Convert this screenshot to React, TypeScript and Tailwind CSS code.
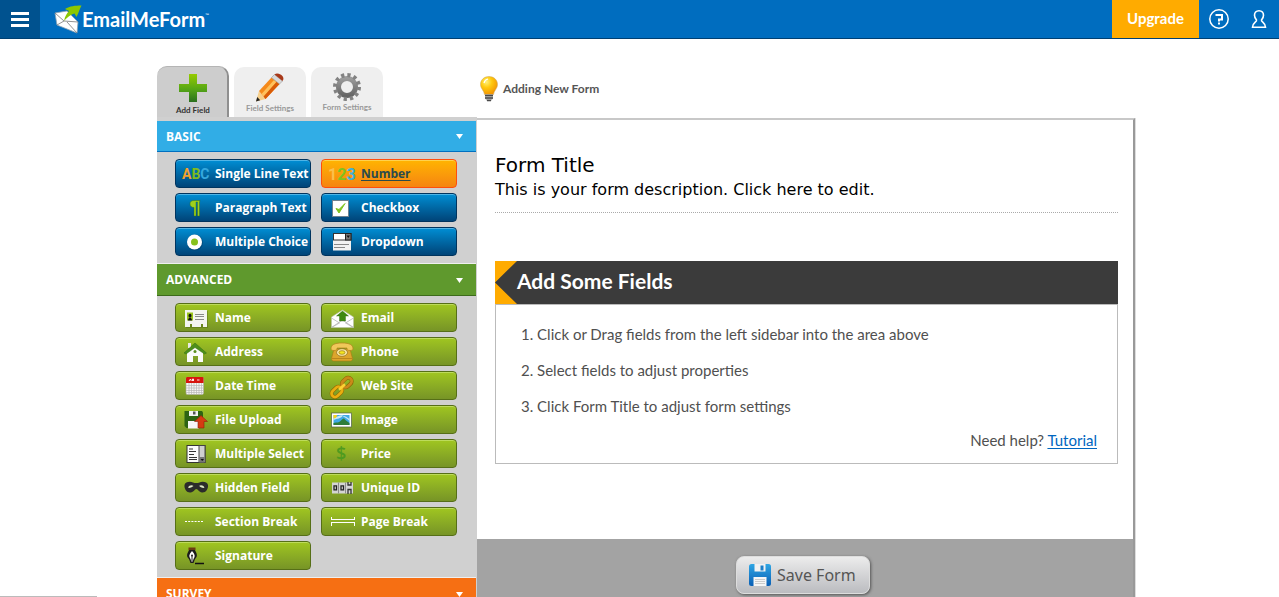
import type { ReactNode } from "react";
import clsx from "clsx";

interface FieldItem {
  label: string;
  icon: ReactNode;
  active?: boolean;
}

interface FieldSectionProps {
  title: string;
  headerClass: string;
  buttonClass: string;
  items: FieldItem[];
}

const Icon = ({ children }: { children: ReactNode }) => (
  <svg
    viewBox="0 0 24 23"
    className="h-[23px] w-6 shrink-0 overflow-visible"
    aria-hidden="true"
  >
    {children}
  </svg>
);

const basicFields: FieldItem[] = [
  {
    label: "Single Line Text",
    icon: (
      <Icon>
        <text x="-1" y="17" className="font-[Roboto,sans-serif] text-[14px] font-bold">
          <tspan fill="#f2a12b">A</tspan>
          <tspan fill="#7fba1e">B</tspan>
          <tspan fill="#35a8df">C</tspan>
        </text>
      </Icon>
    ),
  },
  {
    label: "Number",
    active: true,
    icon: (
      <Icon>
        <text x="-1" y="18" className="font-[Roboto,sans-serif] text-[16px] font-bold">
          <tspan fill="#fbc04b">1</tspan>
          <tspan fill="#7fc31e">2</tspan>
          <tspan fill="#3fb0d8">3</tspan>
        </text>
      </Icon>
    ),
  },
  {
    label: "Paragraph Text",
    icon: (
      <Icon>
        <path
          d="M17 4.500H11C8 4.500 7 6 7 8c0 2.200 1.500 3.500 4 3.500V20h2V6h1.500v14h2V6z"
          fill="#9fd01c"
          stroke="#2f6b10"
          strokeWidth=".4"
        />
      </Icon>
    ),
  },
  {
    label: "Checkbox",
    icon: (
      <Icon>
        <rect x="3.500" y="4.500" width="16" height="16" fill="#fff" stroke="#6f8190" />
        <path d="M7 12.500l3 4.500 6-9.500-6 6z" fill="#7fc31e" stroke="#7fc31e" />
      </Icon>
    ),
  },
  {
    label: "Multiple Choice",
    icon: (
      <Icon>
        <circle cx="12" cy="12.500" r="8" fill="#003a66" opacity=".5" />
        <circle cx="11.500" cy="12" r="7.500" fill="#fff" />
        <circle cx="11.500" cy="12" r="3.500" fill="#86c11c" />
      </Icon>
    ),
  },
  {
    label: "Dropdown",
    icon: (
      <Icon>
        <rect x="4" y="10" width="18" height="10.500" fill="#f1f1f1" />
        <path d="M5 14.500h15M5 17.500h11" stroke="#888" />
        <rect x="4.500" y="3.500" width="17.500" height="6.500" fill="#fff" stroke="#333" />
        <rect x="16.500" y="3.500" width="5.500" height="6.500" fill="#777" stroke="#222" />
        <path d="M17.500 5.500h3.500l-1.750 2.500z" fill="#111" />
      </Icon>
    ),
  },
];

const advancedFields: FieldItem[] = [
  {
    label: "Name",
    icon: (
      <Icon>
        <path d="M3 5h22v17H3z" fill="#4a6312" opacity=".4" />
        <path d="M2 4h22v17h-4v-3h-2v3H9v-3H7v3H2z" fill="#f4f5f1" />
        <rect x="4" y="6.500" width="6" height="8" fill="#9ac31c" />
        <path d="M5 14.500c0-2 1-2.500 2-2.500s2 .5 2 2.500z" fill="#111" />
        <ellipse cx="7" cy="9.800" rx="1.500" ry="2" fill="#111" />
        <path d="M12 8.500h9M12 10.500h9M12 13.500h9" stroke="#8a8a8a" />
      </Icon>
    ),
  },
  {
    label: "Email",
    icon: (
      <Icon>
        <path d="M2.500 11L13.500 4 24.500 11v10.500h-22z" fill="#fff" stroke="#b9c2a6" strokeWidth=".6" />
        <path d="M2.500 12l8 5-8 4.500M24.500 12l-8 5 8 4.500M2.500 21.500L13.500 14l11 7.500" fill="none" stroke="#b5b5b5" strokeWidth=".8" />
        <path d="M13.500 5l6 5h-3v5h-6v-5h-3z" fill="#3f8a12" stroke="#2d6b0c" strokeWidth=".4" />
      </Icon>
    ),
  },
  {
    label: "Address",
    icon: (
      <Icon>
        <path d="M4 12l8-7 8 7v10h-5v-6H10v6H4z" fill="#fbfbf9" />
        <path d="M5 3h3v5H5z" fill="#e9e9e6" />
        <path d="M1 13L12 3l11.500 10-2 1L12 7.500 3 14z" fill="#4d8f1b" stroke="#35700f" strokeWidth=".5" />
        <circle cx="12" cy="11.500" r="1.500" fill="#5b8f1e" />
      </Icon>
    ),
  },
  {
    label: "Phone",
    icon: (
      <Icon>
        <path d="M5 9h16l2.500 9.500c0 2-1 2.500-2.500 2.500H5c-1.500 0-2.500-.5-2.500-2.500z" fill="#dda52c" stroke="#a97913" strokeWidth=".6" />
        <path d="M2 9c0-4 3-6 11-6s11 2 11 6c0 2-6 2-6 0V8H8v1c0 2-6 2-6 0z" fill="#f0c85a" stroke="#b1811a" strokeWidth=".7" />
        <ellipse cx="13" cy="12.500" rx="5.500" ry="3.800" fill="#fae79d" stroke="#7d5c14" strokeWidth=".6" />
        <ellipse cx="13" cy="12.500" rx="3" ry="1.800" fill="#f5e61e" stroke="#8a6a1b" strokeWidth=".6" />
        <path d="M3 18.500h20" stroke="#b27d15" strokeWidth=".8" />
      </Icon>
    ),
  },
  {
    label: "Date Time",
    icon: (
      <Icon>
        <rect x="3" y="3.500" width="17.500" height="17" rx="1.500" fill="#f5f5f3" stroke="#a9a9a0" strokeWidth=".6" />
        <path d="M3 9V4.500C3 3.500 3.500 3 4.500 3H19c1 0 1.500.5 1.500 1.500V9z" fill="#d7150f" />
        <path d="M6 7l1.500-2 .8 2M9.500 7V5h1v2M14 6h2.500" stroke="#fff" fill="none" strokeWidth=".9" />
        <path
          d="M3 11.500h17.500M3 14h17.500M3 16.500h17.500M3 18.500h17.500M6 9v11M8.500 9v11M11 9v11M13.500 9v11M16 9v11M18.500 9v11"
          stroke="#b8b8b8"
          strokeWidth=".7"
        />
      </Icon>
    ),
  },
  {
    label: "Web Site",
    icon: (
      <Icon>
        <g fill="none" transform="rotate(-43 13 13)">
          <rect x="0" y="9.500" width="12" height="7" rx="3.500" stroke="#8a6200" strokeWidth="3.800" />
          <rect x="14" y="9.500" width="11" height="7" rx="3.500" stroke="#8a6200" strokeWidth="3.800" />
          <rect x="0" y="9.500" width="12" height="7" rx="3.500" stroke="#e9ae10" strokeWidth="2.800" />
          <rect x="14" y="9.500" width="11" height="7" rx="3.500" stroke="#c98a1a" strokeWidth="2.800" />
          <path d="M9 13h8" stroke="#fbd235" strokeWidth="2.500" />
        </g>
      </Icon>
    ),
  },
  {
    label: "File Upload",
    icon: (
      <Icon>
        <path d="M1.500 3h17.500l1 1.500v15.500H3.500L1.500 18z" fill="#2d6412" />
        <path d="M6 3h9v5H6z" fill="#f2f2f2" />
        <path d="M10 3.500h2.500v3H10z" fill="#555" />
        <path d="M5 13h11v7.500H5z" fill="#f7f7f7" />
        <path d="M18 7.500l6.500 6h-3.500v6.500h-6v-6.500h-3.500z" fill="#d63c12" stroke="#8e2408" strokeWidth=".6" />
      </Icon>
    ),
  },
  {
    label: "Image",
    icon: (
      <Icon>
        <rect x="2.500" y="5" width="20" height="14" fill="#fff" stroke="#4d5f48" strokeWidth=".7" />
        <rect x="4.500" y="7" width="16" height="10" fill="#3fa9e6" />
        <path d="M4.500 12c4-2 7-1 9-4 1.500 1 4 2 7 5V11c-3-2-4-3-6-3-2-2-6 1-10 2z" fill="#c8e8f5" />
        <path d="M4.500 17v-2c4-1 5 0 7-2s3-3 4-2 3 3 5 4v2z" fill="#2f7d3a" />
        <path d="M4.500 7h3.500c0 2-1.500 3.500-3.500 3.500z" fill="#f7d21d" />
      </Icon>
    ),
  },
  {
    label: "Multiple Select",
    icon: (
      <Icon>
        <rect x="4" y="3.500" width="18" height="17" fill="#fbfbfb" stroke="#333" />
        <rect x="16" y="3.500" width="6" height="17" fill="#cfcfcf" stroke="#444" />
        <rect x="16.500" y="15" width="5" height="5.500" fill="#777" />
        <path d="M17.500 17h3.500l-1.750 2z" fill="#111" />
        <path d="M6 7h4M6 9.500h7M6 12.500h5M6 15.500h8M6 17.500h8" stroke="#333" />
      </Icon>
    ),
  },
  {
    label: "Price",
    icon: (
      <Icon>
        <text x="7" y="18" fill="#4f9a1f" className="font-['Open_Sans',sans-serif] text-[18px] font-semibold">
          $
        </text>
      </Icon>
    ),
  },
  {
    label: "Hidden Field",
    icon: (
      <Icon>
        <path
          d="M1.500 9C2 6 7 5 10 6.500c2 .8 4.500.8 6.500 0C19.500 5 24.500 6 25 9c.5 4-2.500 8-6 7.500-3-.3-4-3.500-5.700-3.500S11 16.300 7.500 16.500C4 17 1 13 1.500 9z"
          fill="#2b2b2b"
        />
        <path d="M5 11.800c1.200-2.800 4-3 5.500-1.800-1 .2-1.500 2.300-5.500 1.800zM21.500 11.800c-1.200-2.800-4-3-5.500-1.800 1 .2 1.500 2.300 5.500 1.800z" fill="#dfe8c8" />
      </Icon>
    ),
  },
  {
    label: "Unique ID",
    icon: (
      <Icon>
        <rect x="3" y="6.500" width="21" height="11" fill="#d4d4d4" />
        <path d="M9.500 6.500v11M16.500 6.500v11" stroke="#8a8a8a" />
        <path d="M5 9.800h2.500v4H5zM12 9.800h2.500v4H12z" fill="none" stroke="#222" strokeWidth="1.300" />
        <path d="M19 6v3h3V6M19 18v-4.500h3V18" fill="none" stroke="#333" strokeWidth="1.300" />
      </Icon>
    ),
  },
  {
    label: "Section Break",
    icon: (
      <Icon>
        <path d="M2 11.500h18" stroke="#fff" strokeDasharray="2 1.200" />
      </Icon>
    ),
  },
  {
    label: "Page Break",
    icon: (
      <Icon>
        <path d="M2.500 7v3M2.500 12v4M25.500 7v3M25.500 12v4M2 9.500h24M2 12.500h24" stroke="#fff" fill="none" />
      </Icon>
    ),
  },
  {
    label: "Signature",
    icon: (
      <Icon>
        <path d="M5.500 3.500h7v2.500h-7z" fill="#6b3d12" />
        <path d="M6 6h6c2 4 3 6 0 9l-1.500 4h-3L6 15c-3-3-2-5 0-9z" fill="#1c1c1c" />
        <path d="M9 7c3 3 3.500 5.500 1.500 8L9.500 18h-1l-1-3C5.500 12.500 6 10 9 7z" fill="#fff" />
        <path d="M9 12v6" stroke="#222" />
        <circle cx="9" cy="11.500" r="1" fill="#222" />
        <path d="M12 19.500h9" stroke="#111" strokeWidth="1.500" />
      </Icon>
    ),
  },
];

const FieldButton = ({ item, className }: { item: FieldItem; className: string }) => (
  <button
    type="button"
    className={clsx(
      "flex h-[29px] items-center gap-2 rounded border pl-[7px] text-left font-['Open_Sans',sans-serif] text-[12px] leading-4 font-bold whitespace-nowrap",
      item.active
        ? "border-[#ff4e0d] bg-linear-to-b from-[#ffb400] to-[#f58410] text-[#2b4a4d] underline underline-offset-2 shadow-[inset_0_1px_0_#ffd24d]"
        : className
    )}
  >
    {item.icon}
    {item.label}
  </button>
);

const SectionHeader = ({ title, className }: { title: string; className: string }) => (
  <button
    type="button"
    className={clsx(
      "flex w-full items-center justify-between border-b pt-px pr-[13px] pl-[9px] text-left font-['Open_Sans',sans-serif] text-[12px] leading-4 font-bold text-white",
      className
    )}
  >
    {title}
    <svg viewBox="0 0 7 5" className="h-[5px] w-[7px]" aria-hidden="true">
      <path d="M0 0h7L3.500 5z" fill="#fff" />
    </svg>
  </button>
);

const FieldSection = ({ title, headerClass, buttonClass, items }: FieldSectionProps) => (
  <section>
    <SectionHeader title={title} className={headerClass} />
    <div className="grid grid-cols-2 gap-x-2.5 gap-y-[5px] border-b border-[#efefef] py-[7px] pr-[19px] pl-[18px]">
      {items.map((item) => (
        <FieldButton key={item.label} item={item} className={buttonClass} />
      ))}
    </div>
  </section>
);

const Logo = () => (
  <a href="#" className="ml-[14px] flex items-center text-white">
    <svg viewBox="0 0 28 30" className="h-[30px] w-7" aria-hidden="true">
      <path d="M1 9l12-2 11 11-1 11L3 21z" fill="#fff" stroke="#8fa3b3" strokeWidth=".8" />
      <path d="M1 9l9 8 14 1M10 17l-7 4M13 18l10 11" fill="none" stroke="#777" strokeWidth=".8" />
      <path d="M10 17c1-5 3-8 5-10l-4-2c5-3 10-3.500 16.500-3.500C26 4 25 8 22.500 13l-2-3.500C16 11 14 13 10 17z" fill="#8cc800" />
    </svg>
    <span className="text-[20px] leading-6 font-bold">EmailMeForm</span>
    <span className="mb-2 text-[5px] leading-none">™</span>
  </a>
);

const Header = () => (
  <header className="flex h-[39px] items-stretch border-b border-[#004072] bg-[#006dbf]">
    <button
      type="button"
      aria-label="Menu"
      className="flex w-10 flex-col items-center justify-center gap-[3px] bg-[#00528f]"
    >
      <span className="h-[3px] w-[18px] bg-white" />
      <span className="h-[3px] w-[18px] bg-white" />
      <span className="h-[3px] w-[18px] bg-white" />
    </button>
    <Logo />
    <a
      href="#"
      className="ml-auto flex w-[87px] items-center justify-center bg-[#ffab00] pb-0.5 text-[15px] font-bold text-white"
    >
      Upgrade
    </a>
    <button type="button" aria-label="Help" className="flex w-10 items-center justify-center pb-px">
      <svg viewBox="0 0 20 20" className="size-5" fill="none" stroke="#fff" aria-hidden="true">
        <circle cx="10" cy="10" r="9.200" strokeWidth="1.500" />
        <path d="M6.500 6h6.500v4.500H10v2" strokeWidth="2" />
        <path d="M9 14.500h2" strokeWidth="2" />
      </svg>
    </button>
    <button type="button" aria-label="Account" className="flex w-10 items-center justify-center">
      <svg viewBox="0 0 16 20" className="h-5 w-4" fill="none" stroke="#fff" strokeWidth="1.600" aria-hidden="true">
        <path d="M8 1.800c-3 0-4.500 2-4.500 4.500 0 2.300 1 3.300 2 4.600C6.200 13 1.500 13.500 1.500 18.300h13c0-4.800-4.700-5.300-4-7.400 1-1.300 2-2.300 2-4.600 0-2.500-1.500-4.500-4.500-4.500z" />
      </svg>
    </button>
  </header>
);

const tabBase =
  "flex w-[72px] flex-col items-center rounded-t-[10px] text-[8px] leading-[10px] font-bold";

const Tabs = () => (
  <nav className="flex w-80 items-end gap-[5px]">
    <button
      type="button"
      className={clsx(
        tabBase,
        "h-[51px] border-t border-r-2 border-t-[#b5b5b5] border-r-[#8f8f8f] bg-[#cdcdcd] pt-[7px] pl-0.5 text-[#333]"
      )}
    >
      <svg viewBox="0 0 28 28" className="h-7 w-7" aria-hidden="true">
        <defs>
          <linearGradient id="plus" x1="0" y1="0" x2="0" y2="1">
            <stop offset="0" stopColor="#96cb00" />
            <stop offset=".55" stopColor="#55a516" />
            <stop offset="1" stopColor="#2a7020" />
          </linearGradient>
        </defs>
        <path d="M10 0h8v10h10v8H18v10h-8V18H0v-8h10z" fill="url(#plus)" />
      </svg>
      <span className="pt-[3px]">Add Field</span>
    </button>
    <button type="button" className={clsx(tabBase, "h-[50px] bg-[#efefef] pt-[6px] text-[#999]")}>
      <svg viewBox="0 0 30 30" className="h-[30px] w-[30px]" aria-hidden="true">
        <path d="M1 28.500L4 18l6.500 8z" fill="#f6cf8b" />
        <path d="M1 28.500l1.200-4.500 3 3.200z" fill="#222" />
        <path d="M4 18L16.500 4.500l8 6.500-14 15z" fill="#f58a1b" />
        <path d="M6.500 21L19 7l2.500 2L8.700 23.500z" fill="#ffc15c" />
        <path d="M8.700 23.500L21.500 9l3 2-14 15z" fill="#d95c08" />
        <path d="M16.500 4.500l3-3 8 6.500-3 3z" fill="#d9d9d9" stroke="#888" strokeWidth=".5" />
        <path d="M19.500 1.500C21 0 23 0 25.500 1.500s4 4 2 6.500z" fill="#a8391a" />
      </svg>
      <span>Field Settings</span>
    </button>
    <button type="button" className={clsx(tabBase, "h-[50px] bg-[#efefef] pt-[5px] text-[#999]")}>
      <svg viewBox="0 0 30 30" className="h-[30px] w-[30px]" aria-hidden="true">
        <defs>
          <linearGradient id="gear" x1="0" y1="0" x2="0" y2="1">
            <stop offset="0" stopColor="#9b9b9b" />
            <stop offset="1" stopColor="#666" />
          </linearGradient>
        </defs>
        <circle cx="15" cy="15" r="8.500" fill="none" stroke="url(#gear)" strokeWidth="5" />
        <circle cx="15" cy="15" r="12" fill="none" stroke="#828282" strokeWidth="4" strokeDasharray="3.200 3.083" />
      </svg>
      <span>Form Settings</span>
    </button>
  </nav>
);

const LightBulb = () => (
  <svg viewBox="0 0 20 28" className="h-7 w-5" aria-hidden="true">
    <defs>
      <radialGradient id="bulb" cx=".35" cy=".3" r=".8">
        <stop offset="0" stopColor="#fff27a" />
        <stop offset=".4" stopColor="#ffc90e" />
        <stop offset="1" stopColor="#f08a00" />
      </radialGradient>
    </defs>
    <path d="M10 1.500c-5 0-8.500 3.500-8.500 8 0 4 3.500 6 4 10h9c.5-4 4-6 4-10 0-4.500-3.500-8-8.500-8z" fill="url(#bulb)" stroke="#c9a45a" strokeWidth=".5" />
    <path d="M6 19.500h8v4l-2 2.500H8l-2-2.500z" fill="#b8b8b8" />
    <path d="M6 20.500h8M6 23h8M8 25.500h4" stroke="#4a4a4a" strokeWidth="1.300" />
    <path d="M5 8c.5-2 2-3.500 4-4" stroke="#fff" strokeWidth="1.200" fill="none" />
  </svg>
);

const SaveIcon = () => (
  <svg viewBox="0 0 24 24" className="size-6" aria-hidden="true">
    <defs>
      <linearGradient id="disk" x1="0" y1="0" x2="0" y2="1">
        <stop offset="0" stopColor="#2fa6e4" />
        <stop offset="1" stopColor="#0a5fb5" />
      </linearGradient>
    </defs>
    <rect x="1" y="1" width="22" height="22" rx="2.500" fill="url(#disk)" />
    <path d="M6.500 1h11v7.500h-11z" fill="#f2f2f2" />
    <path d="M12.500 2.500h3v5h-3z" fill="#1c7fc9" />
    <path d="M5.500 14h13v9h-13z" fill="#f6f6f6" />
    <path d="M7 16.500h10M7 18.500h10M7 20.500h10" stroke="#ccc" />
  </svg>
);

const FormPreview = () => (
  <main className="mt-px mr-px flex-1 border-t-2 border-r-2 border-t-[#c8c8c8] border-r-[#999] bg-white shadow-[1px_0_0_#ddd]">
    <div className="h-[419px] pt-[33px] pr-[15px] pl-[18px]">
      <div className="border-b border-dotted border-[#aaa] pb-[10px] font-['DejaVu_Sans',sans-serif] text-black">
        <h1 className="text-[20px] leading-[25px]">Form Title</h1>
        <p className="text-[16px] leading-6">
          This is your form description. Click here to edit.
        </p>
      </div>

      <section className="mt-12 text-[15px] text-[#505050]">
        <div className="flex h-[43px] items-center bg-[#3b3b3b]">
          <svg viewBox="0 0 22 43" className="h-[43px] w-[22px]" aria-hidden="true">
            <path d="M0 0h22L0 21.500 22 43H0z" fill="#ffab00" />
          </svg>
          <h2 className="pb-1 text-[21px] leading-6 font-bold text-white">Add Some Fields</h2>
        </div>
        <div className="border border-[#bbb] px-5 pt-[17px] pb-[11px]">
          <ol className="list-inside list-decimal space-y-3 pl-[5px] leading-6">
            <li>Click or Drag fields from the left sidebar into the area above</li>
            <li>Select fields to adjust properties</li>
            <li>Click Form Title to adjust form settings</li>
          </ol>
          <p className="mt-[10px] text-right leading-6">
            Need help?{" "}
            <a href="#" className="text-[#0066bf] underline underline-offset-2">
              Tutorial
            </a>
          </p>
        </div>
      </section>
    </div>

    <footer className="flex h-[100px] justify-center bg-[#a3a3a3] pt-[17px] pr-1">
      <button
        type="button"
        className="flex h-[38px] w-[134px] items-center gap-[5px] rounded-lg border border-[#ddd] bg-linear-to-b from-[#ececec] to-[#bbbcc0] pl-[11px] font-['Noto_Sans',sans-serif] text-[16px] text-[#555] shadow-[1px_1px_3px_#555]"
      >
        <SaveIcon />
        Save Form
      </button>
    </footer>
  </main>
);

const App = () => {
  return (
    <div className="h-screen overflow-hidden bg-white font-[Lato,sans-serif]">
      <Header />
      <div className="mx-auto max-w-[993px] pt-[27px] pl-[14px]">
        <div className="flex items-end">
          <Tabs />
          <div className="flex items-center self-center pb-[6px] pl-[2px] text-[12px] font-bold text-[#555]">
            <LightBulb />
            <span className="pl-1">Adding New Form</span>
          </div>
        </div>

        <div className="flex">
          <aside className="w-80 shrink-0 border-t-4 border-r border-[#d0d0d0] bg-[#d0d0d0]">
            <FieldSection
              title="BASIC"
              headerClass="h-[31px] border-[#0070c0] bg-[#31ade6]"
              buttonClass="border-[#00345e] bg-linear-to-b from-[#008fd5] to-[#004478] text-white shadow-[inset_0_1px_0_#4fb4e6]"
              items={basicFields}
            />
            <FieldSection
              title="ADVANCED"
              headerClass="h-8 border-[#3d6b1b] bg-[#5f992d]"
              buttonClass="border-[#566f17] bg-linear-to-b from-[#a0c620] to-[#779426] text-white shadow-[inset_0_1px_0_#bddb5c]"
              items={advancedFields}
            />
            <SectionHeader title="SURVEY" className="h-8 border-[#b84a05] bg-[#f66f13]" />
          </aside>
          <FormPreview />
        </div>
      </div>
      <div className="fixed bottom-0 left-0 h-px w-[97px] bg-[#bbb]" />
    </div>
  );
};

export default App;
